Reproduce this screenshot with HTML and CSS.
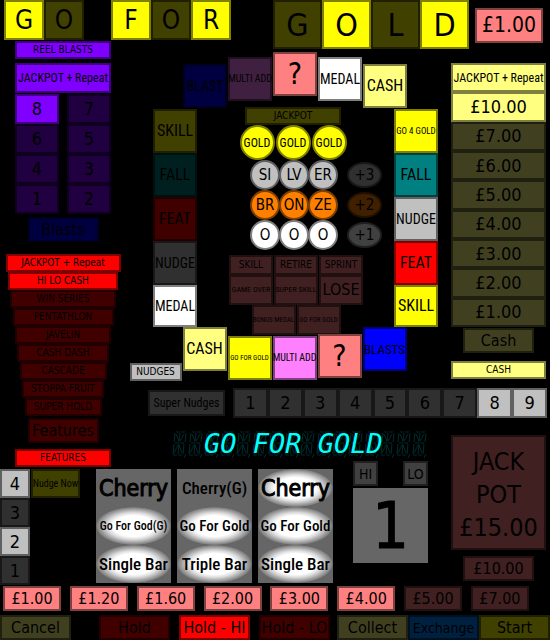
FILE: index.html
```html
<!DOCTYPE html>
<html lang="en">
<head>
<meta charset="utf-8">
<meta name="viewport" content="width=device-width, initial-scale=1">
<title>Go For Gold</title>
<link rel="stylesheet" href="styles.css">
</head>
<body>
<header class="title">
  <div class="word small">
    <span class="lamp yellow">G</span><span class="lamp yellow-off">O</span>
  </div>
  <div class="word small">
    <span class="lamp yellow">F</span><span class="lamp yellow-off">O</span><span class="lamp yellow">R</span>
  </div>
  <div class="word large">
    <span class="lamp yellow-off">G</span><span class="lamp yellow">O</span><span class="lamp yellow-off">L</span><span class="lamp yellow">D</span>
  </div>
  <span class="lamp pink stake">£1.00</span>
</header>

<main class="machine">
  <section class="left">
    <span class="lamp violet plaque">REEL BLASTS</span>
    <span class="lamp violet repeat narrow">JACKPOT + Repeat</span>
    <div class="blasts">
      <span class="lamp violet">8</span><span class="lamp violet-off">7</span>
      <span class="lamp violet-off">6</span><span class="lamp violet-off">5</span>
      <span class="lamp violet-off">4</span><span class="lamp violet-off">3</span>
      <span class="lamp violet-off">1</span><span class="lamp violet-off">2</span>
    </div>
    <span class="lamp navy-off label">Blasts</span>
    <div class="funnel">
      <span class="lamp red w1">JACKPOT + Repeat</span>
      <span class="lamp red w2">HI LO CASH</span>
      <span class="lamp red-off w3">WIN SERIES</span>
      <span class="lamp red-off w4">PENTATHLON</span>
      <span class="lamp red-off w5">JAVELIN</span>
      <span class="lamp red-off w6">CASH DASH</span>
      <span class="lamp red-off w7">CASCADE</span>
      <span class="lamp red-off w8">STOPPA FRUIT</span>
      <span class="lamp red-off w9">SUPER HOLD</span>
    </div>
    <span class="lamp red-off label">Features</span>
    <span class="lamp red plaque features">FEATURES</span>
  </section>

  <section class="board">
    <div class="arc top">
      <span class="lamp navy-off narrow t14 drop-2">BLAST</span>
      <span class="lamp mauve-off narrow t10 drop-1">MULTI ADD</span>
      <span class="lamp pink mark">?</span>
      <span class="lamp white narrow t14 drop-1">MEDAL</span>
      <span class="lamp cream narrow t16 drop-2">CASH</span>
    </div>
    <div class="sides">
      <div class="side">
        <span class="lamp yellow-off narrow t16">SKILL</span>
        <span class="lamp teal-off narrow t16">FALL</span>
        <span class="lamp red-off narrow t16">FEAT</span>
        <span class="lamp grey-off narrow t14">NUDGE</span>
        <span class="lamp white narrow t14">MEDAL</span>
      </div>
      <div class="centre">
        <span class="lamp yellow-off plaque">JACKPOT</span>
        <div class="golds">
          <span class="disc yellow narrow">GOLD</span><span class="disc yellow narrow">GOLD</span><span class="disc yellow narrow">GOLD</span>
        </div>
        <div class="medals">
          <span class="disc medal silver">SI</span><span class="disc medal silver">LV</span><span class="disc medal silver">ER</span><span class="disc bonus grey-off">+3</span>
          <span class="disc medal orange">BR</span><span class="disc medal orange">ON</span><span class="disc medal orange">ZE</span><span class="disc bonus orange-off">+2</span>
          <span class="disc medal white">O</span><span class="disc medal white">O</span><span class="disc medal white">O</span><span class="disc bonus ash-off">+1</span>
        </div>
        <div class="awards">
          <div class="award-row low">
            <span class="lamp pink-off">SKILL</span><span class="lamp pink-off">RETIRE</span><span class="lamp pink-off">SPRINT</span>
          </div>
          <div class="award-row">
            <span class="lamp pink-off narrow t8">GAME OVER</span><span class="lamp pink-off narrow t8">SUPER SKILL</span><span class="lamp pink-off lose">LOSE</span>
          </div>
          <div class="award-row">
            <span class="lamp pink-off narrow t7">BONUS MEDAL</span><span class="lamp pink-off narrow t7">GO FOR GOLD</span>
          </div>
        </div>
      </div>
      <div class="side">
        <span class="lamp yellow narrow t9">GO 4 GOLD</span>
        <span class="lamp teal narrow t16">FALL</span>
        <span class="lamp silver narrow t14">NUDGE</span>
        <span class="lamp red narrow t16">FEAT</span>
        <span class="lamp yellow narrow t16">SKILL</span>
      </div>
    </div>
    <div class="arc bottom">
      <span class="lamp silver plaque nudges">NUDGES</span>
      <span class="lamp cream narrow t16">CASH</span>
      <span class="lamp yellow narrow t7 drop-2">GO FOR GOLD</span>
      <span class="lamp magenta narrow t10 drop-2">MULTI ADD</span>
      <span class="lamp pink mark drop-1">?</span>
      <span class="lamp blue narrow t13">BLASTS</span>
    </div>
  </section>

  <section class="cash">
    <div class="ladder">
      <span class="lamp cream narrow repeat">JACKPOT + Repeat</span>
      <span class="lamp cream">£10.00</span>
      <span class="lamp cream-off">£7.00</span>
      <span class="lamp cream-off">£6.00</span>
      <span class="lamp cream-off">£5.00</span>
      <span class="lamp cream-off">£4.00</span>
      <span class="lamp cream-off">£3.00</span>
      <span class="lamp cream-off">£2.00</span>
      <span class="lamp cream-off">£1.00</span>
    </div>
    <span class="lamp cream-off label">Cash</span>
    <span class="lamp cream plaque">CASH</span>
  </section>

  <section class="nudge-bar">
    <span class="lamp grey-off narrow super">Super Nudges</span>
    <div class="numbers">
      <span class="lamp grey-off">1</span><span class="lamp grey-off">2</span><span class="lamp grey-off">3</span><span class="lamp grey-off">4</span><span class="lamp grey-off">5</span><span class="lamp grey-off">6</span><span class="lamp grey-off">7</span><span class="lamp silver">8</span><span class="lamp silver">9</span>
    </div>
  </section>

  <section class="display">
    <svg class="segments" width="256" height="30" aria-hidden="true">
      <defs>
        <pattern id="cell" width="16" height="30" patternUnits="userSpaceOnUse">
          <g fill="none" stroke="#002c2c" stroke-width="1">
            <path d="M4 3H8M9 3H13M3 14H7M8 14H12M1 26H5M6 26H10"/>
            <path d="M3 4L2 13M14 4L13 13M2 15L1 25M12 15L11 25"/>
            <path d="M8 4L7 13M7 15L6 25M4 5L7 12M12 5L8 12M6 16L2 24M7 16L10 24"/>
            <path d="M14 25L12 29"/>
          </g>
        </pattern>
      </defs>
      <rect width="256" height="30" fill="url(#cell)"/>
    </svg>
    <span class="message">GO FOR GOLD</span>
  </section>

  <section class="play">
    <div class="held">
      <span class="lamp silver">4</span><span class="lamp grey-off">3</span><span class="lamp silver">2</span><span class="lamp grey-off">1</span>
    </div>
    <span class="lamp yellow-off narrow nudge-now">Nudge Now</span>
    <div class="reels">
      <div class="reel">
        <span class="symbol wide">Cherry</span><span class="symbol tight lit">Go For God(G)</span><span class="symbol lit">Single Bar</span>
      </div>
      <div class="reel">
        <span class="symbol">Cherry(G)</span><span class="symbol mid lit">Go For Gold</span><span class="symbol lit">Triple Bar</span>
      </div>
      <div class="reel">
        <span class="symbol wide lit">Cherry</span><span class="symbol mid lit">Go For Gold</span><span class="symbol lit">Single Bar</span>
      </div>
    </div>
    <div class="hilo">
      <span class="lamp ash-off">HI</span>
      <span class="lamp ash-off">LO</span>
      <span class="digit">1</span>
    </div>
  </section>

  <section class="jackpot">
    <span class="lamp pink-off big">JACK<br>POT<br>£15.00</span>
    <span class="lamp pink-off label">£10.00</span>
  </section>
</main>

<section class="prizes">
  <span class="lamp pink">£1.00</span><span class="lamp pink">£1.20</span><span class="lamp pink">£1.60</span><span class="lamp pink">£2.00</span><span class="lamp pink">£3.00</span><span class="lamp pink">£4.00</span><span class="lamp pink-off">£5.00</span><span class="lamp pink-off">£7.00</span>
</section>

<footer class="controls">
  <button type="button" class="lamp cream-off">Cancel</button>
  <div class="holds">
    <button type="button" class="lamp red-off">Hold</button>
    <button type="button" class="lamp red">Hold - HI</button>
    <button type="button" class="lamp red-off">Hold - LO</button>
  </div>
  <div class="actions">
    <button type="button" class="lamp cream-off">Collect</button>
    <button type="button" class="lamp azure-off long">Exchange</button>
    <button type="button" class="lamp yellow-off">Start</button>
  </div>
</footer>
</body>
</html>
```
FILE: styles.css
```css
* {
  box-sizing: border-box;
}

body {
  margin: 0;
  background: #000;
  color: #000;
  font-family: "DejaVu Sans Condensed", "DejaVu Sans", sans-serif;
  font-size: 18px;
  line-height: 1;
}

/* A lamp's rim is its own colour at half brightness. */
.lamp,
.disc {
  display: flex;
  flex-shrink: 0;
  align-items: center;
  justify-content: center;
  border: 2px solid rgba(0, 0, 0, 0.5);
  white-space: nowrap;
}

.disc {
  border-radius: 50%;
}

button.lamp {
  margin: 0;
  padding: 0;
  color: #000;
  font: inherit;
  border-radius: 0;
  cursor: pointer;
}

.narrow {
  font-family: "Liberation Sans Narrow", "Roboto Condensed", "Open Sans Condensed", "DejaVu Sans Condensed", sans-serif;
}

.yellow { background-color: #ff0; }
.yellow-off { background-color: #404000; }
.pink { background-color: #ff8080; }
.pink-off { background-color: #402020; }
.violet { background-color: #8000ff; }
.violet-off { background-color: #200040; }
.blue { background-color: #00f; }
.navy-off { background-color: #000040; }
.red { background-color: #f00; }
.red-off { background-color: #400000; }
.mauve-off { background-color: #402040; }
.magenta { background-color: #ff80ff; }
.white { background-color: #fff; }
.silver { background-color: #c0c0c0; }
.grey-off { background-color: #303030; }
.ash-off { background-color: #404040; }
.cream { background-color: #ffff80; }
.cream-off { background-color: #404020; }
.teal { background-color: #008080; }
.teal-off { background-color: #002020; }
.orange { background-color: #ff8000; }
.orange-off { background-color: #402000; }
.azure-off { background-color: #002040; }

.plaque {
  height: 18px;
  font-size: 10px;
}

.label {
  width: 71px;
  height: 25px;
  font-size: 16px;
}

.repeat {
  font-size: 12px;
}

/* Title */
.title {
  display: flex;
  align-items: flex-start;
  height: 41px;
  padding: 0 7px 0 4px;
}

.word {
  display: flex;
}

.small + .small {
  margin-left: 27px;
}

.small .lamp {
  width: 40px;
  height: 40px;
  font-size: 26px;
}

.large {
  margin-left: auto;
}

.large .lamp {
  width: 49px;
  height: 49px;
  font-size: 32px;
}

.stake {
  width: 68px;
  height: 35px;
  margin: 8px 0 0 6px;
  font-size: 21px;
}

/* Machine */
.machine {
  display: grid;
  grid-template-columns: 129px minmax(0, 1fr) 99px;
  grid-template-rows: 346px 42px 40px auto;
  grid-template-areas:
    "left board cash"
    "left nudge nudge"
    "left display jackpot"
    "play play jackpot";
}

.left {
  grid-area: left;
  display: flex;
  flex-direction: column;
  align-items: center;
  width: 126px;
}

.left .plaque,
.left > .repeat,
.blasts {
  width: 96px;
}

.left > .repeat {
  height: 30px;
  margin: 4px 0 1px;
}

.blasts {
  display: grid;
  grid-template-columns: 44px 44px;
  justify-content: space-between;
  grid-auto-rows: 30px;
  margin-bottom: 3px;
}

.funnel {
  display: flex;
  flex-direction: column;
  align-items: center;
  margin: 12px 0 2px;
}

.funnel .lamp {
  height: 18px;
  font-size: 10px;
}

.w1 { width: 115px; }
.w2 { width: 110px; }
.w3 { width: 106px; }
.w4 { width: 101px; }
.w5 { width: 96px; }
.w6 { width: 92px; }
.w7 { width: 87px; }
.w8 { width: 82px; }
.w9 { width: 77px; }

.left .features {
  margin-top: 6px;
}

/* Board */
.board {
  grid-area: board;
  padding-top: 11px;
}

.arc {
  display: flex;
  justify-content: center;
  gap: 1px;
}

.arc .lamp {
  width: 44px;
  height: 44px;
}

.top {
  height: 57px;
  margin-left: 10px;
}

.top .drop-1 { margin-top: 5px; }
.top .drop-2 { margin-top: 12px; }

.bottom {
  margin-right: 44px;
}

.bottom .drop-1 { margin-top: 7px; }
.bottom .drop-2 { margin-top: 9px; }

.arc .nudges {
  width: 52px;
  height: 18px;
  margin-top: 36px;
}

.arc .mark {
  font-size: 30px;
}

.sides {
  display: flex;
  justify-content: center;
  height: 218px;
  margin-left: 11px;
}

.side .lamp {
  width: 44px;
  height: 44px;
}

.side .lamp:last-child {
  height: 42px;
}

.t16 { font-size: 16px; }
.t14 { font-size: 14px; }
.t13 { font-size: 13px; }
.t10 { font-size: 10px; }
.t9 { font-size: 9px; }
.t8 { font-size: 8px; }
.t7 { font-size: 7px; }

.centre {
  display: flex;
  flex-direction: column;
  align-items: center;
  width: 197px;
  margin-top: -2px;
  padding-right: 5px;
}

.centre .plaque {
  width: 96px;
}

.golds {
  display: flex;
  gap: 1px;
}

.golds .disc {
  width: 35px;
  height: 35px;
  font-size: 12px;
}

.medals {
  display: grid;
  grid-template-columns: 29px 29px 39px 35px;
  grid-auto-rows: 30px;
  justify-content: end;
  align-items: center;
  align-self: stretch;
  margin-right: 7px;
}

.medals .disc {
  font-size: 15px;
}

.medal {
  width: 30px;
  height: 30px;
}

.bonus {
  height: 26px;
}

.awards {
  margin: 5px 0 0 6px;
}

.award-row {
  display: flex;
  justify-content: center;
  gap: 1px;
}

.award-row .lamp {
  width: 44px;
  height: 30px;
}

.award-row.low .lamp {
  height: 20px;
  font-size: 10px;
}

.lose {
  font-size: 16px;
}

/* Cash */
.cash {
  grid-area: cash;
  display: flex;
  flex-direction: column;
  align-items: center;
  padding: 22px 4px 0 0;
}

.ladder {
  display: grid;
  grid-template-rows: repeat(9, 1fr);
  align-self: stretch;
  height: 264px;
  margin-bottom: 1px;
}

.cash .plaque {
  align-self: stretch;
  margin-top: 8px;
}

/* Nudges */
.nudge-bar {
  grid-area: nudge;
  display: flex;
  align-items: center;
  gap: 8px;
  height: 32px;
  padding: 0 3px 0 19px;
}

.super {
  width: 77px;
  height: 26px;
  font-size: 12px;
}

.numbers {
  display: grid;
  grid-template-columns: repeat(9, 1fr);
  flex: 1;
}

.numbers .lamp {
  height: 30px;
}

/* Display */
.display {
  grid-area: display;
  display: grid;
  justify-content: center;
  align-items: start;
  padding-left: 20px;
}

.segments,
.message {
  grid-area: 1 / 1;
}

.message {
  padding-left: 32px;
  color: #0ff;
  font-family: "DejaVu Sans Mono", monospace;
  font-size: 27px;
  font-style: oblique;
  line-height: 30px;
}

/* Play */
.play {
  grid-area: play;
  display: flex;
  align-items: flex-start;
  height: 117px;
}

.held {
  display: grid;
  grid-auto-rows: 29px;
  width: 30px;
}

.nudge-now {
  width: 49px;
  height: 29px;
  margin-left: 1px;
  font-size: 10px;
}

.reels {
  display: flex;
  gap: 6px;
  margin-left: 16px;
}

.reel {
  width: 75px;
  background: #666;
}

.symbol {
  display: flex;
  align-items: center;
  justify-content: center;
  height: 38px;
  font-family: "Liberation Sans Narrow", "Roboto Condensed", "DejaVu Sans Condensed", sans-serif;
  font-size: 17px;
  font-weight: 500;
  white-space: nowrap;
}

.symbol.wide {
  font-family: "DejaVu Sans Condensed", sans-serif;
  font-size: 23px;
  -webkit-text-stroke: 1px #000;
}

.symbol.mid {
  font-size: 15px;
}

.symbol.tight {
  font-size: 12px;
}

.lit {
  background: radial-gradient(closest-side, #fff 55%, #ddd 70%, #aaa 85%, #808080 97%, #666 100%);
}

.hilo {
  display: grid;
  grid-template-columns: 25px 25px;
  justify-content: space-between;
  gap: 2px 0;
  width: 75px;
  margin: -8px 0 0 20px;
}

.hilo .lamp {
  height: 25px;
  font-size: 14px;
}

.digit {
  grid-column: span 2;
  display: flex;
  align-items: center;
  justify-content: center;
  height: 75px;
  background: #666;
  font-size: 64px;
  -webkit-text-stroke: 1px #000;
}

/* Jackpot */
.jackpot {
  grid-area: jackpot;
  display: flex;
  flex-direction: column;
  align-items: center;
  gap: 6px;
  padding: 6px 4px 0 0;
}

.jackpot .big {
  display: block;
  align-self: stretch;
  height: 115px;
  padding-top: 8px;
  font-size: 25px;
  line-height: 33px;
  text-align: center;
}

/* Prizes and controls */
.prizes {
  display: flex;
  justify-content: space-between;
  padding: 0 21px 4px 3px;
}

.prizes .lamp {
  width: 58px;
  height: 25px;
  font-size: 16px;
}

.controls {
  display: flex;
  justify-content: space-between;
}

.holds,
.actions {
  display: flex;
}

.holds {
  gap: 9px;
  margin-left: 21px;
}

.controls .lamp {
  width: 71px;
  height: 25px;
  font-size: 16px;
}

.controls .long {
  font-size: 14px;
}
```
